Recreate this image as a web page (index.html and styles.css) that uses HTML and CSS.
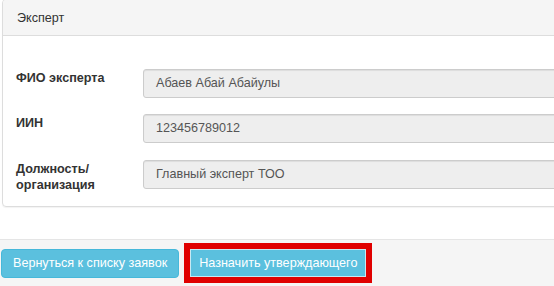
FILE: index.html
```html
<!DOCTYPE html>
<html lang="ru">
<head>
    <meta charset="UTF-8">
    <title>Эксперт</title>
    <link rel="stylesheet" href="styles.css">
</head>
<body>
<div class="panel">
    <div class="panel-heading">Эксперт</div>
    <div class="panel-body">
        <div class="row">
            <label class="label">ФИО эксперта</label>
            <div class="field">Абаев Абай Абайулы</div>
        </div>
        <div class="row">
            <label class="label">ИИН</label>
            <div class="field">123456789012</div>
        </div>
        <div class="row">
            <label class="label">Должность/<br>организация</label>
            <div class="field">Главный эксперт ТОО</div>
        </div>
    </div>
</div>
<div class="footer">
    <button class="btn">Вернуться к списку заявок</button>
    <span class="highlight"><button class="btn">Назначить утверждающего</button></span>
</div>
</body>
</html>
```

FILE: styles.css
```css
* {
    margin: 0;
    padding: 0;
    box-sizing: border-box;
}

html,
body {
    overflow: hidden;
}

body {
    width: 620px;
    height: 286px;
    font: 12.6px "Liberation Sans", Arial, sans-serif;
    color: #333;
    background: #fff;
}

.panel {
    margin: -1px 0 0 2px;
    border: 1px solid #ddd;
    border-radius: 4px;
    box-shadow: 0 1px 1px rgba(0, 0, 0, .05);
}

.panel-heading {
    height: 36px;
    padding: 0 14px;
    line-height: 36px;
    background: #f5f5f5;
    border-bottom: 1px solid #ddd;
    border-radius: 3px 3px 0 0;
}

.panel-body {
    padding: 33px 0 13px 13px;
}

.row {
    display: flex;
    align-items: flex-start;
    margin-bottom: 16px;
}

.row:nth-child(2) {
    margin-bottom: 17px;
}

.row:last-child {
    margin-bottom: 0;
}

.label {
    width: 127px;
    padding-top: 1px;
    font-weight: bold;
    line-height: 16px;
}

.field {
    flex: 1;
    height: 29px;
    padding: 0 12px;
    line-height: 27px;
    color: #555;
    background: #eee;
    border: 1px solid #ccc;
    border-radius: 3px;
    box-shadow: inset 0 1px 1px rgba(0, 0, 0, .075);
}

.footer {
    display: flex;
    align-items: center;
    gap: 5px;
    margin-top: 32px;
    padding: 3px 0 10px 1px;
    background: #f5f5f5;
    border-top: 1px solid #e5e5e5;
}

.btn {
    height: 29px;
    padding: 0 11px;
    font: 12.6px "Liberation Sans", Arial, sans-serif;
    color: #fff;
    background: #5bc0de;
    border: 1px solid #46b8da;
    border-radius: 4px;
}

.highlight {
    display: inline-flex;
    border: 6px solid #e00000;
}

.highlight .btn {
    height: 28px;
    border: 1px solid #c6e9f3;
    border-radius: 0;
    padding: 0 8px;
}
```
